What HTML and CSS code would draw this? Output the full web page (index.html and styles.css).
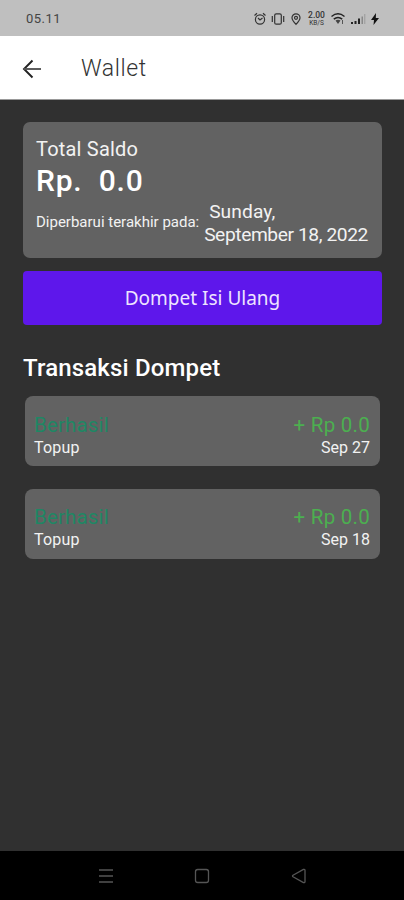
FILE: index.html
```html
<!DOCTYPE html>
<html lang="id">
<head>
<meta charset="utf-8">
<title>Wallet</title>
<link rel="stylesheet" href="styles.css">
</head>
<body>
<div class="screen">
  <div class="status">
    <span class="clock">05.11</span>
    <div class="indicators">
      <svg width="14" height="14" viewBox="0 0 14 14" fill="none" stroke="#333" stroke-width="1.2"><circle cx="7" cy="7.5" r="4.6"/><path d="M1.5 3.5 4 1.3M12.5 3.5 10 1.3M5 6l2 2 2.5-2"/></svg>
      <svg width="14" height="14" viewBox="0 0 14 14" fill="none" stroke="#333" stroke-width="1.2"><rect x="3.7" y="1.8" width="6.6" height="10.4" rx="1.5"/><path d="M1.3 4v6M12.7 4v6"/></svg>
      <svg width="14" height="14" viewBox="0 0 14 14" fill="none" stroke="#333" stroke-width="1.2"><path d="M7 12.3C4.5 9.8 3 8 3 5.8a4 4 0 0 1 8 0C11 8 9.5 9.8 7 12.3Z"/><circle cx="7" cy="5.8" r="1.5"/></svg>
      <span class="speed"><b>2.00</b><i>KB/S</i></span>
      <svg width="16" height="14" viewBox="0 0 16 14"><path d="M1.5 4.5Q8-.8 14.5 4.5M3.8 7.2Q8 3.8 12.2 7.2" fill="none" stroke="#222" stroke-width="1.5"/><path d="M5.5 8.5Q8 7 10.5 8.5L8 12Z" fill="#444"/><path d="M12.5 8v4" stroke="#555"/></svg>
      <svg width="16" height="14" viewBox="0 0 16 14"><path d="M1 10h2v2H1zM4.5 9h2v3h-2zM8 6.5h2V12H8z" fill="#222"/><path d="M11.5 4.5h1.5V12h-1.5z" fill="#888"/><path d="M14.3 2h1v10h-1z" fill="#999"/></svg>
      <svg width="10" height="14" viewBox="0 0 10 14"><path d="M6 1 1 8h3l-.5 5L9 6H5.8Z" fill="#111"/></svg>
    </div>
  </div>
  <header class="appbar">
    <svg class="back" width="20" height="20" viewBox="0 0 20 20" fill="none" stroke="#222" stroke-width="1.9"><path d="M10.5 1.5 2 10l8.5 8.5"/><path d="M2 10h17" stroke="#555"/></svg>
    <h1 class="title"><span>Wallet</span></h1>
  </header>
  <main class="content">
    <section class="balance">
      <div class="balance-label"><span>Total Saldo</span></div>
      <div class="amount"><span>Rp.&nbsp; 0.0</span></div>
      <div class="updated">
        <span class="updated-label">Diperbarui terakhir pada:</span>
        <span class="date"><span class="day">Sunday,</span><span class="full">September 18, 2022</span></span>
      </div>
    </section>
    <button class="topup"><span>Dompet Isi Ulang</span></button>
    <h2 class="heading"><span>Transaksi Dompet</span></h2>
    <article class="item">
      <div class="row"><span class="state">Berhasil</span><span class="value">+ Rp 0.0</span></div>
      <div class="row small"><span class="kind">Topup</span><span class="when">Sep 27</span></div>
    </article>
    <article class="item">
      <div class="row"><span class="state">Berhasil</span><span class="value">+ Rp 0.0</span></div>
      <div class="row small"><span class="kind">Topup</span><span class="when">Sep 18</span></div>
    </article>
  </main>
  <nav class="nav">
    <svg width="16" height="16" viewBox="0 0 16 16" stroke="#555" stroke-width="1.5"><path d="M1 2h14M1 8h14M1 14h14"/></svg>
    <svg width="16" height="16" viewBox="0 0 16 16" fill="none" stroke="#555" stroke-width="1.3"><rect x="1.5" y="1.5" width="13" height="13" rx="2.2"/></svg>
    <svg width="16" height="16" viewBox="0 0 16 16" fill="none" stroke="#555" stroke-width="1.3" stroke-linejoin="round"><path d="M2 7.2 12.5 1.4Q14 1 14 2.5v11Q14 15 12.5 14.6L2 8.8Q1 8 2 7.2Z"/></svg>
  </nav>
</div>
</body>
</html>
```
FILE: styles.css
```css
* { box-sizing: border-box; }
body { margin: 0; font-family: Roboto, "Liberation Sans", sans-serif; background: #303030; }
.screen { width: 404px; height: 900px; display: flex; flex-direction: column; overflow: hidden; background: #303030; color: #f2f2f2; }
svg { display: block; flex: none; }
span { white-space: nowrap; }
.status { height: 36px; flex: none; background: #bfbfbf; display: flex; justify-content: space-between; align-items: center; padding: 1px 24px 0 26px; color: #444; }
.clock { font-size: 13px; letter-spacing: .5px; }
.indicators { display: flex; align-items: center; gap: 4px; }
.speed { display: flex; flex-direction: column; align-items: center; width: 19px; color: #333; }
.speed b { font-size: 8.5px; line-height: 9px; font-weight: 500; }
.speed i { font-size: 6.5px; line-height: 7px; font-style: normal; }
.appbar { height: 64px; flex: none; background: #fff; border-bottom: 1px solid #999; display: flex; align-items: center; padding: 2px 0 0 22px; }
.title { margin: 0 0 0 39px; font-size: 23px; line-height: 28px; font-weight: 300; color: #333; letter-spacing: .6px; }
.content { flex: 1; padding: 22px 22px 0 23px; }
.balance { height: 136px; border-radius: 7px; background: #626262; padding: 14px 14px 0 13px; }
.balance-label { font-size: 20px; line-height: 26px; letter-spacing: .2px; }
.amount { font-size: 30px; line-height: 37px; font-weight: 500; color: #fff; letter-spacing: .75px; }
.updated { display: flex; align-items: center; justify-content: space-between; margin-top: 2px; }
.updated-label { font-size: 15px; padding-bottom: 3px; }
.date { display: flex; flex-direction: column; font-size: 19.2px; line-height: 22.5px; letter-spacing: -.4px; }
.day { padding-left: 5px; letter-spacing: .1px; }
.topup { display: block; width: 100%; height: 54px; margin: 13px 0 0; padding: 0; border: 0; border-radius: 4px; background: #5e17eb; color: #eee4ff; font: 400 19px/24px "Noto Sans", sans-serif; letter-spacing: 0; }
.heading { margin: 27px 0 0; font-size: 24px; line-height: 32px; font-weight: 500; color: #fff; letter-spacing: .15px; }
.item { height: 70px; margin: 12px 2px 23px; padding: 17px 10px 0 9px; border-radius: 8px; background: #626262; }
.item + .item { margin-top: 0; padding-top: 16px; }
.row { display: flex; justify-content: space-between; font-size: 20.5px; line-height: 24px; }
.small { font-size: 16px; line-height: 22px; }
.state { color: #1f8764; letter-spacing: .15px; }
.value { color: #4caf50; letter-spacing: .25px; }
.kind { letter-spacing: .2px; }
.nav { height: 49px; flex: none; background: #000; display: grid; grid-template-columns: 16px 16px 16px; column-gap: 80.5px; justify-content: center; align-items: center; }
```
